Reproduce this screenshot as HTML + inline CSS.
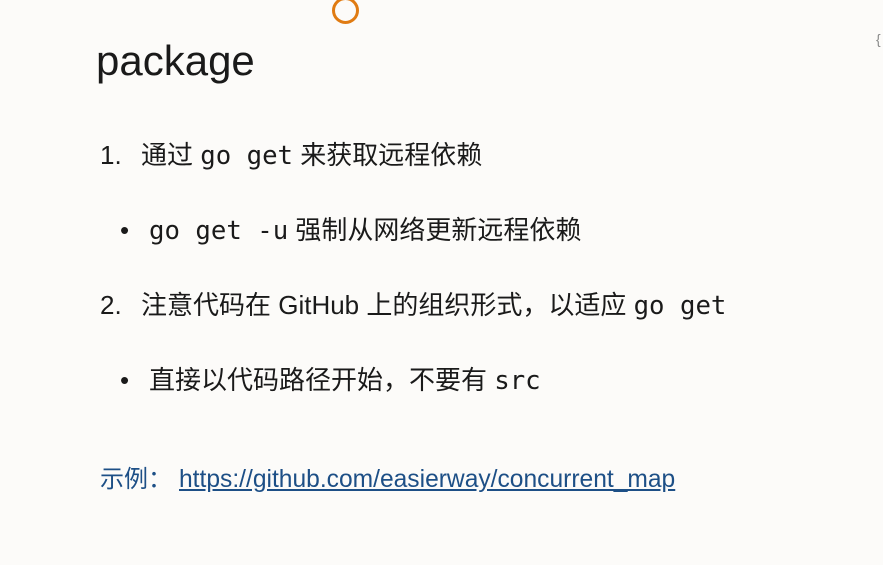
<!DOCTYPE html>
<html><head><meta charset="utf-8"><style>
body{margin:0;width:883px;height:565px;background:#fcfbf9;position:relative;overflow:hidden;font-family:"Liberation Sans","Noto Sans CJK SC",sans-serif;color:#1a1a1a}
.a{position:absolute;white-space:nowrap;line-height:1}
.m{font-family:"DejaVu Sans Mono","Liberation Mono",monospace;font-size:25.7px}
.t{font-size:26px}
</style></head><body>
<div class="a" style="left:332px;top:-3px;border:3px solid #e07b12;border-radius:50%;box-sizing:border-box;width:27px;height:27px"></div>
<div class="a" style="left:876px;top:32px;font-size:14px;color:#888">{</div>
<div class="a" style="left:96px;top:40px;font-size:42px">package</div>
<div class="a t" style="left:100px;top:142px">1.</div>
<div class="a t" style="left:141px;top:142px">通过 <span class="m">go get</span> 来获取远程依赖</div>
<div class="a t" style="left:120px;top:217px">•</div>
<div class="a t" style="left:149px;top:217px"><span class="m">go get -u</span> 强制从网络更新远程依赖</div>
<div class="a t" style="left:100px;top:292px">2.</div>
<div class="a t" style="left:141px;top:292px">注意代码在 GitHub 上的组织形式，以适应 <span class="m">go get</span></div>
<div class="a t" style="left:120px;top:367px">•</div>
<div class="a t" style="left:149px;top:367px">直接以代码路径开始，不要有 <span class="m">src</span></div>
<div class="a" style="left:100px;top:468px;font-size:24px;color:#1d4f86">示例：</div>
<div class="a" style="left:179px;top:468px;font-size:24.6px;color:#1d4f86;text-decoration:underline">https://github.com/easierway/concurrent_map</div>
</body></html>
